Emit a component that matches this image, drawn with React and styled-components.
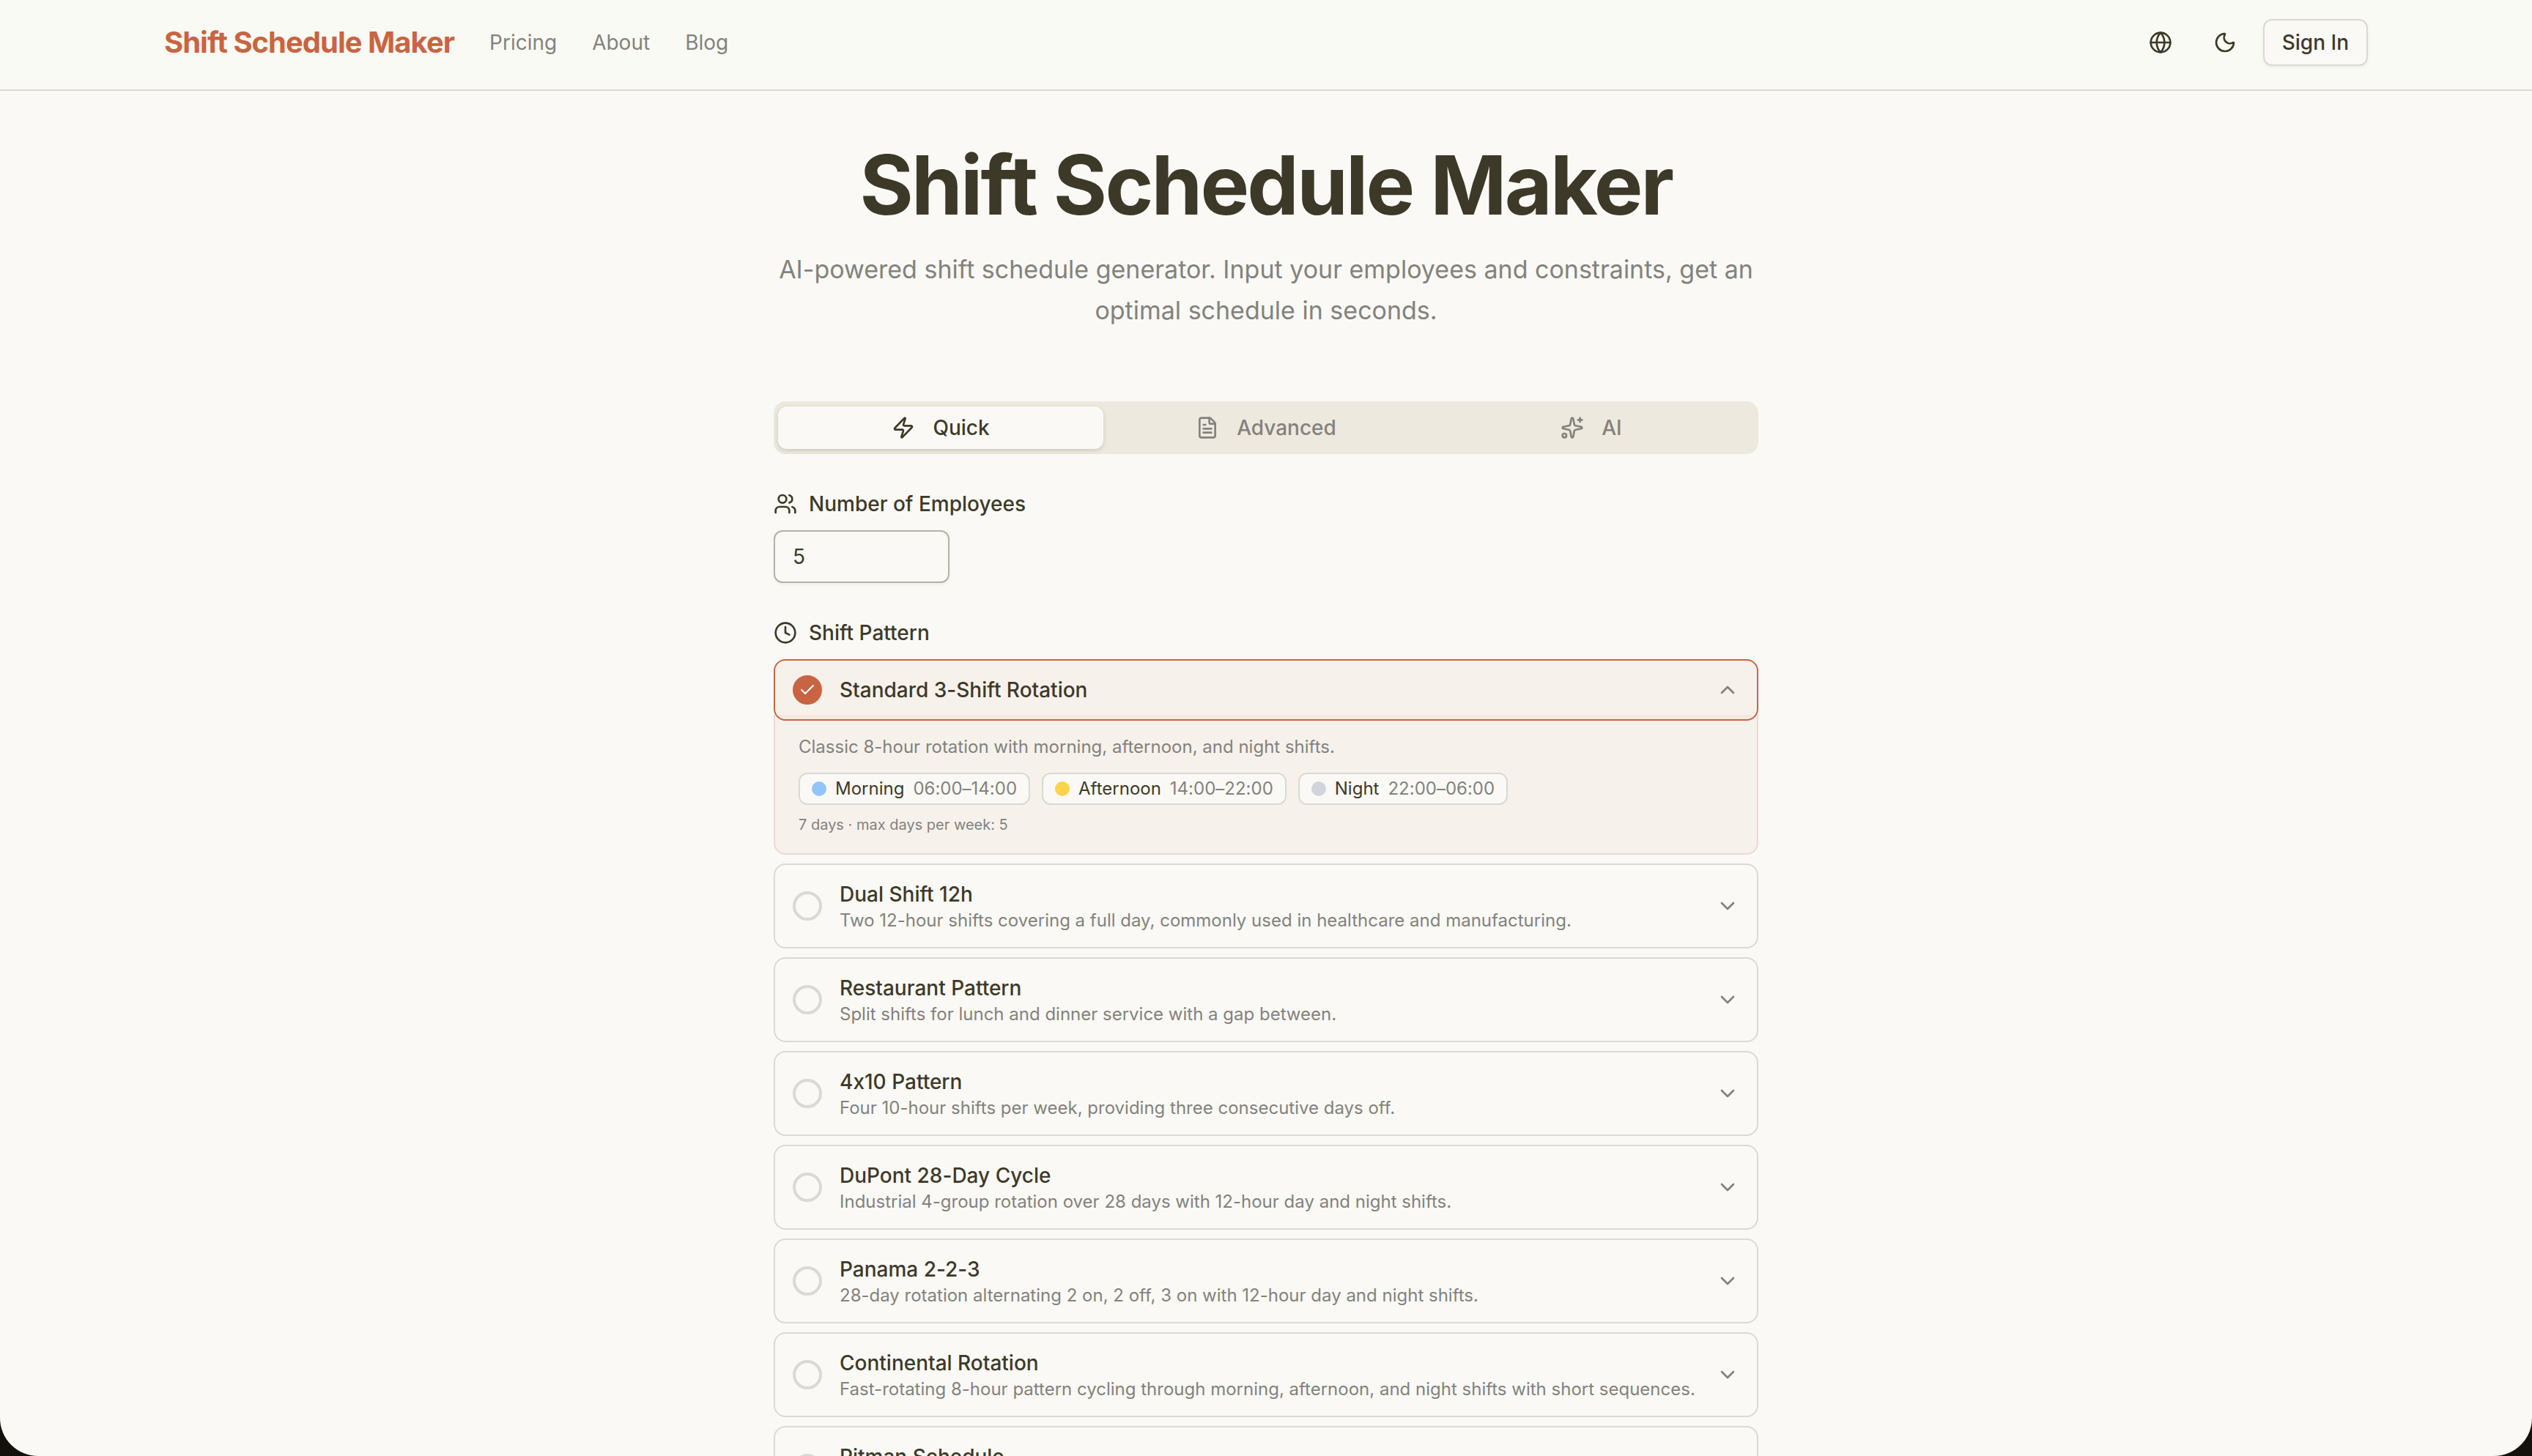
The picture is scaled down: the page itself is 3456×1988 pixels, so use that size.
import { useState } from "react"
import styled, { createGlobalStyle } from "styled-components"
import {
    Check,
    ChevronDown,
    ChevronUp,
    Clock,
    FileText,
    Globe,
    Moon,
    Sparkles,
    Users,
    Zap,
} from "lucide-react"

const GlobalStyle = createGlobalStyle`
    * {
        box-sizing: border-box;
    }
    body {
        margin: 0;
        background: #14110d;
        color: #3d3929;
        font-family: Inter, "Liberation Sans", sans-serif;
        font-size: 28px;
        line-height: 40px;
        font-variant-ligatures: no-contextual;
        -webkit-font-smoothing: antialiased;
    }
    button, input {
        font: inherit;
        color: inherit;
    }
`

const Screen = styled.div`
    height: 100vh;
    overflow: hidden;
    background: #faf9f5;
    border-radius: 0 0 52px 52px;
`

const Header = styled.header`
    background: #fafaf4;
    border-bottom: 2px solid #dad9d4;
`
const HeaderInner = styled.div`
    display: flex;
    align-items: center;
    justify-content: space-between;
    max-width: 3072px;
    margin: 0 auto;
    padding: 26px 32px 32px;
`
const Nav = styled.nav`
    display: flex;
    align-items: center;
    gap: 48px;
`
const Logo = styled.a`
    color: #c96442;
    font-size: 40px;
    font-weight: 700;
    letter-spacing: -0.025em;
    text-decoration: none;
`
const NavLink = styled.a`
    color: #83827d;
    text-decoration: none;
`
const Actions = styled.div`
    display: flex;
    align-items: center;
    gap: 16px;
`
const IconButton = styled.button`
    display: flex;
    align-items: center;
    justify-content: center;
    width: 72px;
    height: 64px;
    padding: 0;
    background: none;
    border: none;
    border-radius: 12px;
`
const SignIn = styled.button`
    height: 64px;
    padding: 0 24px;
    background: #faf9f5;
    border: 2px solid #dad9d4;
    border-radius: 12px;
    box-shadow: 0 2px 4px rgba(0, 0, 0, 0.05);
    font-weight: 500;
`

const Main = styled.main`
    display: flex;
    flex-direction: column;
    max-width: 1344px;
    margin: 0 auto;
    padding: 68px 0;
`
const Title = styled.h1`
    margin: 0;
    font-size: 112px;
    line-height: 120px;
    font-weight: 700;
    letter-spacing: -0.025em;
    text-align: center;
    white-space: nowrap;
`
const Subtitle = styled.p`
    margin: 28px 0 96px;
    color: #83827d;
    font-size: 34px;
    line-height: 56px;
    text-align: center;
`

const TabList = styled.div`
    display: grid;
    grid-template-columns: repeat(3, 1fr);
    height: 72px;
    padding: 7px 6px;
    background: #ede9de;
    border-radius: 16px;
`
const Tab = styled.button`
    display: flex;
    align-items: center;
    justify-content: center;
    gap: 24px;
    padding: 0;
    border: none;
    border-radius: 12px;
    background: ${({ $active }) => ($active ? "#faf9f5" : "none")};
    color: ${({ $active }) => ($active ? "#3d3929" : "#83827d")};
    box-shadow: ${({ $active }) => ($active ? "0 2px 6px rgba(0, 0, 0, 0.15)" : "none")};
    font-weight: 500;
`

const Field = styled.div`
    margin-top: 48px;
`
const FieldLabel = styled.label`
    display: flex;
    align-items: center;
    gap: 16px;
    margin-bottom: 16px;
    font-weight: 500;
`
const NumberInput = styled.input`
    display: block;
    width: 240px;
    height: 72px;
    padding: 0 24px;
    background: #faf9f5;
    border: 2px solid #b4b2a7;
    border-radius: 12px;
    box-shadow: 0 2px 4px rgba(0, 0, 0, 0.05);
    appearance: textfield;

    &::-webkit-inner-spin-button {
        display: none;
    }
`

const PatternList = styled.div`
    display: flex;
    flex-direction: column;
    gap: 12px;
`
const PatternRow = styled.div`
    position: relative;
    display: flex;
    align-items: center;
    gap: 24px;
    padding: 20px 24px;
    border: 2px solid ${({ $selected }) => ($selected ? "#c96442" : "#dad9d4")};
    border-radius: 16px;
    background: ${({ $selected }) => ($selected ? "rgba(201, 100, 66, 0.05)" : "none")};
`
const PatternLabel = styled.label`
    display: flex;
    flex: 1;
    align-items: center;
    gap: 24px;
`
const RadioBox = styled.span`
    display: grid;
    place-items: center;
    flex: none;
    color: #fff;

    > * {
        grid-area: 1 / 1;
    }
`
const Radio = styled.input`
    appearance: none;
    width: 40px;
    height: 40px;
    margin: 0;
    border: 4px solid #dad9d4;
    border-radius: 50%;

    &:checked {
        border-color: #c96442;
        background: #c96442;
    }
`
const PatternText = styled.span`
    display: flex;
    flex-direction: column;
`
const PatternName = styled.span`
    font-weight: 500;
`
const Hint = styled.span`
    color: #83827d;
    font-size: 24px;
    line-height: 32px;
`
const Toggle = styled.button`
    display: flex;
    padding: 0;
    border: none;
    background: none;
    color: #83827d;
`
const Details = styled.div`
    margin-top: -8px;
    padding: 24px 32px;
    border: 2px solid #eed9d2;
    border-top: none;
    border-radius: 0 0 16px 16px;
    background: #f6f1eb;
`
const DetailsText = styled.p`
    margin: 0;
    color: #83827d;
    font-size: 24px;
    line-height: 39px;
`
const Chips = styled.div`
    display: flex;
    flex-wrap: wrap;
    gap: 16px;
    margin: 16px 0 12px;
`
const Chip = styled.span`
    display: flex;
    align-items: center;
    gap: 12px;
    padding: 4px 16px;
    border: 2px solid #dad9d4;
    border-radius: 12px;
    background: #faf9f5;
    font-size: 24px;
    line-height: 32px;
`
const Dot = styled.span`
    width: 20px;
    height: 20px;
    border-radius: 50%;
    background: ${({ $color }) => $color};
`
const ChipTime = styled.span`
    color: #83827d;
`
const Limits = styled.p`
    margin: 0;
    color: #83827d;
    font-size: 20px;
    line-height: 30px;
`

const tabs = [
    { name: "Quick", Icon: Zap },
    { name: "Advanced", Icon: FileText },
    { name: "AI", Icon: Sparkles },
]

const shifts = [
    { name: "Morning", time: "06:00–14:00", color: "#93c5fd" },
    { name: "Afternoon", time: "14:00–22:00", color: "#fcd34d" },
    { name: "Night", time: "22:00–06:00", color: "#d1d5db" },
]

const patterns = [
    {
        name: "Standard 3-Shift Rotation",
        text: "Classic 8-hour rotation with morning, afternoon, and night shifts.",
        shifts,
        limits: "7 days · max days per week: 5",
    },
    { name: "Dual Shift 12h", text: "Two 12-hour shifts covering a full day, commonly used in healthcare and manufacturing." },
    { name: "Restaurant Pattern", text: "Split shifts for lunch and dinner service with a gap between." },
    { name: "4x10 Pattern", text: "Four 10-hour shifts per week, providing three consecutive days off." },
    { name: "DuPont 28-Day Cycle", text: "Industrial 4-group rotation over 28 days with 12-hour day and night shifts." },
    { name: "Panama 2-2-3", text: "28-day rotation alternating 2 on, 2 off, 3 on with 12-hour day and night shifts." },
    { name: "Continental Rotation", text: "Fast-rotating 8-hour pattern cycling through morning, afternoon, and night shifts with short sequences." },
    { name: "Pitman Schedule", text: "14-day rotation with every other weekend off." },
]

function Pattern({ pattern, selected, open, onSelect, onToggle }) {
    return (
        <div>
            <PatternRow $selected={selected}>
                <PatternLabel>
                    <RadioBox>
                        <Radio type="radio" name="pattern" checked={selected} onChange={onSelect} />
                        {selected && <Check size={24} />}
                    </RadioBox>
                    <PatternText>
                        <PatternName>{pattern.name}</PatternName>
                        {!open && <Hint>{pattern.text}</Hint>}
                    </PatternText>
                </PatternLabel>
                <Toggle type="button" aria-label={`Details of ${pattern.name}`} aria-expanded={open} onClick={onToggle}>
                    {open ? <ChevronUp size={32} /> : <ChevronDown size={32} />}
                </Toggle>
            </PatternRow>
            {open && (
                <Details>
                    <DetailsText>{pattern.text}</DetailsText>
                    {pattern.shifts && (
                        <Chips>
                            {pattern.shifts.map((shift) => (
                                <Chip key={shift.name}>
                                    <Dot $color={shift.color} />
                                    <span>{shift.name}</span>
                                    <ChipTime>{shift.time}</ChipTime>
                                </Chip>
                            ))}
                        </Chips>
                    )}
                    <Limits>{pattern.limits}</Limits>
                </Details>
            )}
        </div>
    )
}

export default function App() {
    const [tab, setTab] = useState("Quick")
    const [employees, setEmployees] = useState(5)
    const [selected, setSelected] = useState(0)
    const [open, setOpen] = useState(0)

    return (
        <Screen>
            <GlobalStyle />
            <Header>
                <HeaderInner>
                    <Nav>
                        <Logo href="#">Shift Schedule Maker</Logo>
                        <NavLink href="#pricing">Pricing</NavLink>
                        <NavLink href="#about">About</NavLink>
                        <NavLink href="#blog">Blog</NavLink>
                    </Nav>
                    <Actions>
                        <IconButton type="button" aria-label="Language">
                            <Globe size={32} />
                        </IconButton>
                        <IconButton type="button" aria-label="Dark mode">
                            <Moon size={32} />
                        </IconButton>
                        <SignIn type="button">Sign In</SignIn>
                    </Actions>
                </HeaderInner>
            </Header>

            <Main>
                <Title>Shift Schedule Maker</Title>
                <Subtitle>
                    AI-powered shift schedule generator. Input your employees and constraints, get an
                    optimal schedule in seconds.
                </Subtitle>

                <TabList role="tablist">
                    {tabs.map(({ name, Icon }) => (
                        <Tab
                            key={name}
                            type="button"
                            role="tab"
                            aria-selected={tab === name}
                            $active={tab === name}
                            onClick={() => setTab(name)}
                        >
                            <Icon size={32} />
                            {name}
                        </Tab>
                    ))}
                </TabList>

                <Field>
                    <FieldLabel htmlFor="employees">
                        <Users size={32} />
                        Number of Employees
                    </FieldLabel>
                    <NumberInput
                        id="employees"
                        type="number"
                        min="1"
                        value={employees}
                        onChange={(e) => setEmployees(e.target.value)}
                    />
                </Field>

                <Field>
                    <FieldLabel as="div" id="pattern-label">
                        <Clock size={32} />
                        Shift Pattern
                    </FieldLabel>
                    <PatternList role="radiogroup" aria-labelledby="pattern-label">
                        {patterns.map((pattern, i) => (
                            <Pattern
                                key={pattern.name}
                                pattern={pattern}
                                selected={selected === i}
                                open={open === i}
                                onSelect={() => setSelected(i)}
                                onToggle={() => setOpen(open === i ? -1 : i)}
                            />
                        ))}
                    </PatternList>
                </Field>
            </Main>
        </Screen>
    )
}
